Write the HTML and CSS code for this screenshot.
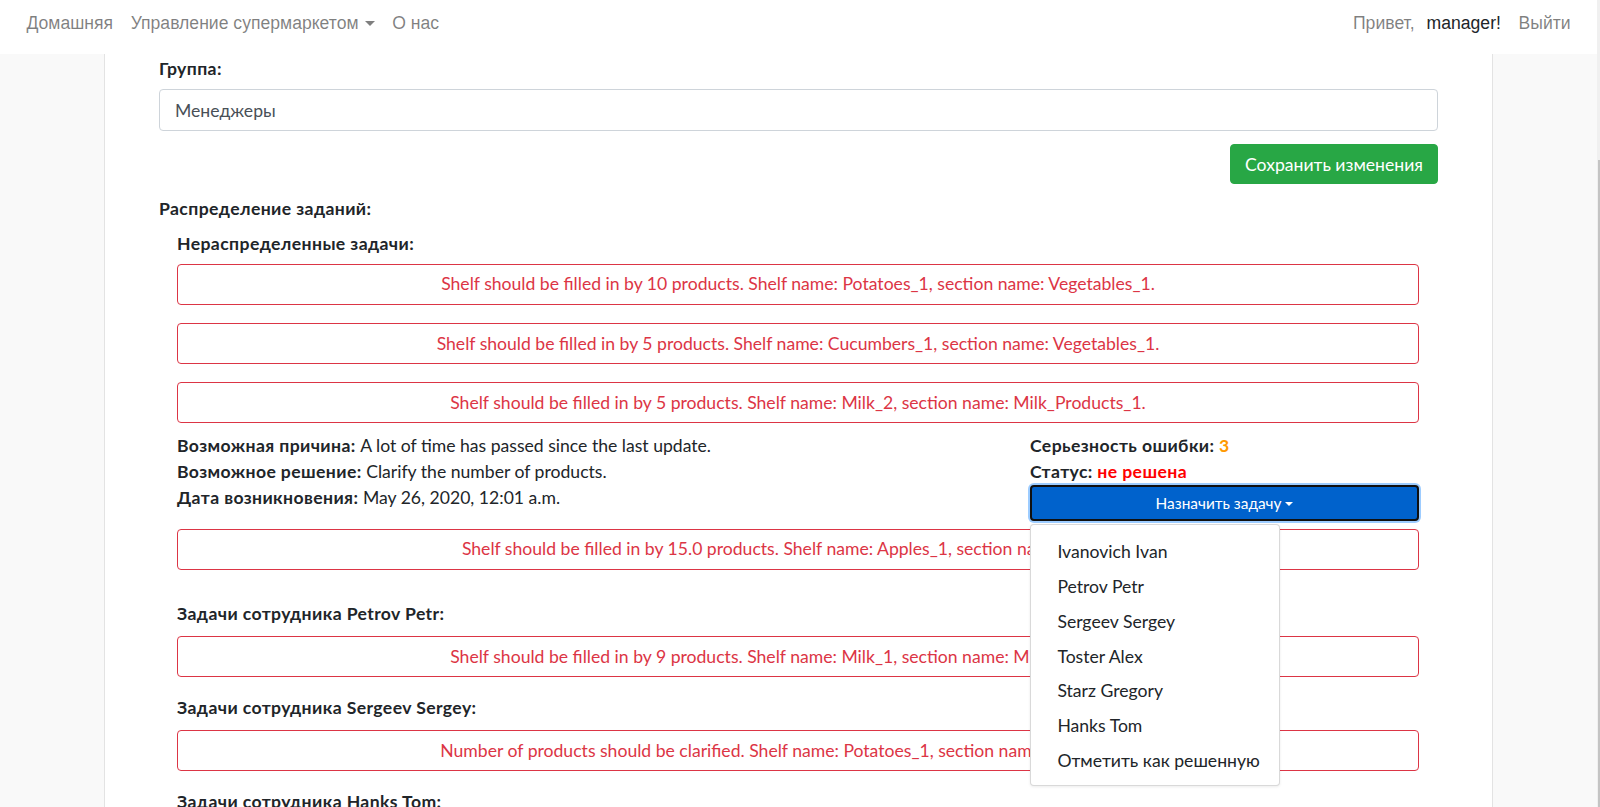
FILE: index.html
```html
<!DOCTYPE html>
<html lang="ru">
<head>
<meta charset="utf-8">
<title>Управление супермаркетом</title>
<link rel="stylesheet" href="styles.css">
</head>
<body>
<nav class="navbar">
  <div class="nav-left">
    <a class="nav-link" href="#">Домашняя</a>
    <a class="nav-link dropdown-toggle" href="#">Управление супермаркетом</a>
    <a class="nav-link" href="#">О нас</a>
  </div>
  <div class="nav-right">
    <span class="nav-text">Привет,</span>
    <span class="nav-user">manager!</span>
    <a class="nav-link" href="#">Выйти</a>
  </div>
</nav>
<main class="container">
  <form class="group-form">
    <label class="field-label" for="group">Группа:</label>
    <input class="form-control" id="group" type="text" value="Менеджеры">
    <div class="form-actions">
      <button class="btn btn-success" type="button">Сохранить изменения</button>
    </div>
  </form>
  <div class="section-title">Распределение заданий:</div>
  <div class="tasks">
    <section class="task-group unassigned">
      <div class="group-title">Нераспределенные задачи:</div>
      <div class="task">Shelf should be filled in by 10 products. Shelf name: Potatoes_1, section name: Vegetables_1.</div>
      <div class="task">Shelf should be filled in by 5 products. Shelf name: Cucumbers_1, section name: Vegetables_1.</div>
      <div class="task">Shelf should be filled in by 5 products. Shelf name: Milk_2, section name: Milk_Products_1.</div>
      <div class="task-details">
        <div class="details-left">
          <p><b>Возможная причина:</b> A lot of time has passed since the last update.</p>
          <p><b>Возможное решение:</b> Clarify the number of products.</p>
          <p><b>Дата возникновения:</b> May 26, 2020, 12:01 a.m.</p>
        </div>
        <div class="details-right">
          <p><b>Серьезность ошибки:</b> <b class="severity">3</b></p>
          <p><b>Статус:</b> <b class="status">не решена</b></p>
          <div class="dropdown">
            <button class="btn-assign" type="button">Назначить задачу<span class="caret"></span></button>
            <div class="dropdown-menu">
              <a class="dropdown-item" href="#">Ivanovich Ivan</a>
              <a class="dropdown-item" href="#">Petrov Petr</a>
              <a class="dropdown-item" href="#">Sergeev Sergey</a>
              <a class="dropdown-item" href="#">Toster Alex</a>
              <a class="dropdown-item" href="#">Starz Gregory</a>
              <a class="dropdown-item" href="#">Hanks Tom</a>
              <a class="dropdown-item" href="#">Отметить как решенную</a>
            </div>
          </div>
        </div>
      </div>
      <div class="task">Shelf should be filled in by 15.0 products. Shelf name: Apples_1, section name: Fruits_1.</div>
    </section>
    <section class="task-group">
      <div class="group-title">Задачи сотрудника Petrov Petr:</div>
      <div class="task">Shelf should be filled in by 9 products. Shelf name: Milk_1, section name: Milk_Products_1.</div>
    </section>
    <section class="task-group">
      <div class="group-title">Задачи сотрудника Sergeev Sergey:</div>
      <div class="task">Number of products should be clarified. Shelf name: Potatoes_1, section name: Vegetables_1.</div>
    </section>
    <section class="task-group">
      <div class="group-title">Задачи сотрудника Hanks Tom:</div>
      <div class="task">Shelf should be filled in by 20 products. Shelf name: Bread_1, section name: Bakery_1.</div>
    </section>
  </div>
</main>
<div class="scrollbar"><div class="scrollbar-thumb"></div></div>
</body>
</html>
```
FILE: styles.css
```css
* { box-sizing: border-box; }

html, body { margin: 0; padding: 0; }

body {
  background: #f9f9f9;
  color: #212529;
  font-family: Lato, "Open Sans", sans-serif;
  font-size: 17.6px;
  line-height: 26.4px;
  padding-right: 3px;
}

a { text-decoration: none; }

/* navbar */
.navbar {
  height: 54px;
  background: #fff;
  display: flex;
  justify-content: space-between;
  align-items: flex-start;
  padding: 10px 17.6px 0;
  font-family: "Liberation Sans", Arial, sans-serif;
  font-size: 17.6px;
  line-height: 26.4px;
}
.nav-left, .nav-right { display: flex; align-items: center; }
.nav-link { color: rgba(0, 0, 0, 0.5); padding: 0 8.8px; }
.nav-text { color: rgba(0, 0, 0, 0.5); padding-left: 8.8px; }
.nav-user { color: #212529; padding: 0 8.8px 0 12px; }
.dropdown-toggle::after {
  content: "";
  display: inline-block;
  margin-left: 6px;
  vertical-align: 3px;
  border-top: 5.3px solid;
  border-left: 5.3px solid transparent;
  border-right: 5.3px solid transparent;
}

/* container */
.container {
  width: 1389px;
  margin: 0 auto;
  background: #fff;
  border-left: 1px solid #e3e3e3;
  border-right: 1px solid #e3e3e3;
  padding: 2px 54px 40px;
  min-height: 900px;
}

.field-label,
.section-title,
.group-title,
.task-details b { font-weight: 700; letter-spacing: 0.4px; }

.group-form { display: flex; flex-direction: column; }
.field-label { display: block; margin-bottom: 6.8px; }
.form-control {
  height: 42px;
  border: 1px solid #ced4da;
  border-radius: 4px;
  padding: 1px 15px 0;
  font: inherit;
  color: #495057;
  background: #fff;
}
.form-actions { display: flex; justify-content: flex-end; margin-top: 13px; }
.btn {
  font: inherit;
  border: 1px solid transparent;
  border-radius: 4px;
  height: 40px;
  padding: 2px 14px 0;
}
.btn-success { background: #28a745; border-color: #28a745; color: #fff; }

.section-title { margin-top: 12px; }

.tasks { margin: 8px 19px 0 18px; }

.group-title { margin-bottom: 6.8px; }
.task-group + .task-group .group-title { margin-bottom: 8.8px; }

.task {
  border: 1px solid #dc3545;
  border-radius: 4px;
  color: #dc3545;
  text-align: center;
  height: 41px;
  padding: 6.6px 12px 5px;
  white-space: nowrap;
  overflow: hidden;
}
.task + .task { margin-top: 18.2px; }

.task-group + .task-group { margin-top: 18px; }
.task-group.unassigned { margin-bottom: 31px; }

.task-details {
  display: grid;
  grid-template-columns: 1fr 389px;
  margin-top: 9.6px;
  line-height: 26px;
}
.task-details + .task { margin-top: 8px; }
.task-details p { margin: 0; }
.severity { color: #ff9900; }
.status { color: #ff0000; }

.dropdown { position: relative; }
.btn-assign {
  width: 100%;
  height: 36px;
  background: #0062cc;
  color: #fff;
  border: 2px solid #101010;
  border-radius: 4px;
  box-shadow: 0 0 0 2px rgba(38, 143, 255, 0.45);
  font: inherit;
  font-size: 15.4px;
  line-height: 22px;
  padding: 0 12px;
}
.caret {
  display: inline-block;
  margin-left: 4px;
  vertical-align: 3px;
  border-top: 4.6px solid #fff;
  border-left: 4.6px solid transparent;
  border-right: 4.6px solid transparent;
}

.dropdown-menu {
  position: absolute;
  top: calc(100% + 3px);
  left: 0;
  width: 250px;
  background: #fff;
  border: 1px solid rgba(0, 0, 0, 0.15);
  border-radius: 4px;
  padding: 10.3px 0 7.6px;
  box-shadow: 0 1px 3px rgba(0, 0, 0, 0.08);
  z-index: 10;
}
.dropdown-item {
  display: block;
  color: #212529;
  padding: 4.4px 26.4px;
  line-height: 25.9px;
  white-space: nowrap;
}

.scrollbar {
  position: fixed;
  top: 0;
  right: 0;
  width: 3px;
  height: 100%;
  background: #f0f0f0;
}
.scrollbar-thumb {
  position: absolute;
  top: 160px;
  right: 0;
  width: 2px;
  bottom: 0;
  background: #c4c4c4;
}
```
